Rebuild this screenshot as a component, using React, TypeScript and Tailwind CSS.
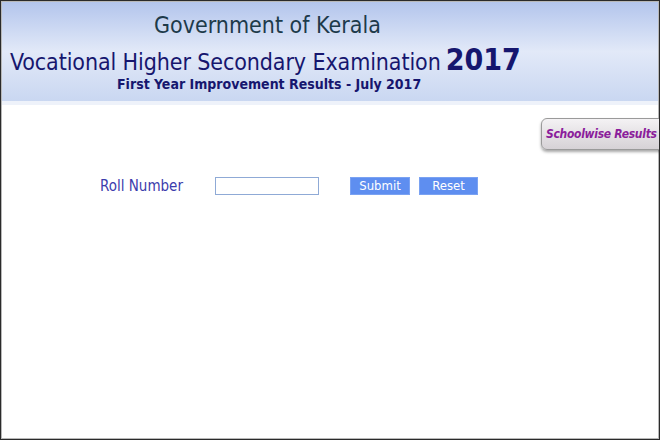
import React from 'react';

const tahoma = { fontFamily: '"DejaVu Sans Condensed", "DejaVu Sans", sans-serif' };

export default function App() {
    return (
        <div className="w-[660px] h-[440px] overflow-hidden border border-[#2a2a2a] bg-white">
            <div className="h-full border border-[#b8b8b8] flex flex-col">
                {/* Header */}
                <header
                    className="h-[103px] bg-gradient-to-b from-[#b3c5ec] via-[#e2e9f8] to-[#c9d7f1] border-b-4 border-[#eef2fa] flex flex-col"
                    style={tahoma}
                >
                    <h1 className="mt-[9px] ml-[152px] text-[23px] leading-[28px] text-[#1d3a4a]">Government of Kerala</h1>
                    <div className="mt-[7px] ml-[8px] flex items-baseline gap-[5px] text-[#16166e]">
                        <span className="text-[23px] leading-[28px] tracking-[-0.1px]">Vocational Higher Secondary Examination</span>
                        <span className="text-[30px] leading-[28px] font-bold">2017</span>
                    </div>
                    <p className="mt-[0px] ml-[115px] text-[14px] leading-[16px] font-bold text-[#16166e]">
                        First Year Improvement Results - July 2017
                    </p>
                </header>

                {/* Body */}
                <main className="flex-1 flex flex-col">
                    <div className="flex justify-end mt-[13px] -mr-[13px]">
                        <a className="w-[130px] h-[32px] rounded-[6px] border border-[#9a9a9a] bg-gradient-to-b from-[#f4f2f4] to-[#d6d2d6] shadow-[0_2px_3px_rgba(0,0,0,0.35)] flex items-center pl-[4px] text-[12px] font-bold italic tracking-[-0.3px] text-[#8b1d9b]"
                            style={tahoma}>
                            Schoolwise Results
                        </a>
                    </div>

                    <form className="mt-[25px] ml-[98px] flex items-center" style={tahoma}>
                        <label className="w-[115px] text-[15px] text-[#3c3cac]">Roll Number</label>
                        <input className="w-[104px] h-[18px] border border-[#8faad6] bg-white outline-none" type="text" />
                        <button type="button" className="ml-[31px] w-[60px] h-[18px] bg-[#5e8ef0] border border-[#7aa2f2] text-white text-[13px] leading-[16px]">
                            Submit
                        </button>
                        <button type="reset" className="ml-[9px] w-[59px] h-[18px] bg-[#5e8ef0] border border-[#7aa2f2] text-white text-[13px] leading-[16px]">
                            Reset
                        </button>
                    </form>
                </main>
            </div>
        </div>
    );
}
